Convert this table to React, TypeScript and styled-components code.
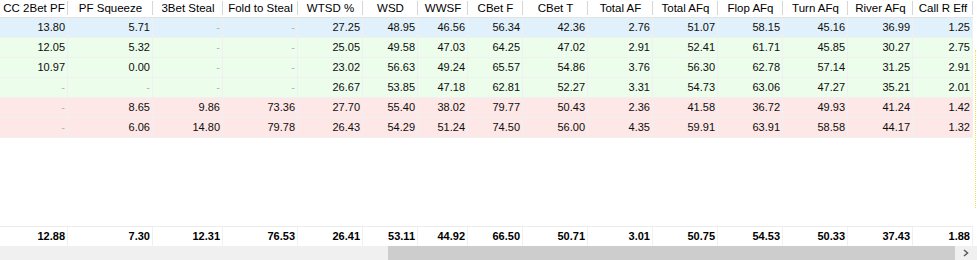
import React, { ReactElement } from 'react';
import styled, { createGlobalStyle } from 'styled-components';

const GlobalStyle = createGlobalStyle`
  html, body {
    margin: 0;
    padding: 0;
    background: #ffffff;
  }
  body {
    font-family: 'Liberation Sans', Arial, sans-serif;
  }
`;

const COLUMNS = '68px 85px 70px 75px 65px 55px 50px 55px 65px 65px 65px 65px 65px 65px 60px';

const HEADERS = [
  'CC 2Bet PF',
  'PF Squeeze',
  '3Bet Steal',
  'Fold to Steal',
  'WTSD %',
  'WSD',
  'WWSF',
  'CBet F',
  'CBet T',
  'Total AF',
  'Total AFq',
  'Flop AFq',
  'Turn AFq',
  'River AFq',
  'Call R Eff',
];

type Tone = 'blue' | 'green' | 'red';

const TONES: Record<Tone, string> = {
  blue: '#e1f1fb',
  green: '#ecfdec',
  red: '#fee7e7',
};

const ROWS: { tone: Tone; values: string[] }[] = [
  {
    tone: 'blue',
    values: ['13.80', '5.71', '-', '-', '27.25', '48.95', '46.56', '56.34', '42.36', '2.76', '51.07', '58.15', '45.16', '36.99', '1.25'],
  },
  {
    tone: 'green',
    values: ['12.05', '5.32', '-', '-', '25.05', '49.58', '47.03', '64.25', '47.02', '2.91', '52.41', '61.71', '45.85', '30.27', '2.75'],
  },
  {
    tone: 'green',
    values: ['10.97', '0.00', '-', '-', '23.02', '56.63', '49.24', '65.57', '54.86', '3.76', '56.30', '62.78', '57.14', '31.25', '2.91'],
  },
  {
    tone: 'green',
    values: ['-', '-', '-', '-', '26.67', '53.85', '47.18', '62.81', '52.27', '3.31', '54.73', '63.06', '47.27', '35.21', '2.01'],
  },
  {
    tone: 'red',
    values: ['-', '8.65', '9.86', '73.36', '27.70', '55.40', '38.02', '79.77', '50.43', '2.36', '41.58', '36.72', '49.93', '41.24', '1.42'],
  },
  {
    tone: 'red',
    values: ['-', '6.06', '14.80', '79.78', '26.43', '54.29', '51.24', '74.50', '56.00', '4.35', '59.91', '63.91', '58.58', '44.17', '1.32'],
  },
];

const TOTALS = ['12.88', '7.30', '12.31', '76.53', '26.41', '53.11', '44.92', '66.50', '50.71', '3.01', '50.75', '54.53', '50.33', '37.43', '1.88'];

const Page = styled.div`
  width: 977px;
  height: 260px;
  display: flex;
  flex-direction: column;
  overflow: hidden;
  background: #ffffff;
  font-size: 11px;
  color: #0d0d0d;
`;

const Body = styled.div`
  flex: 1;
  display: flex;
  min-height: 0;
`;

const Table = styled.div`
  width: 973px;
  display: flex;
  flex-direction: column;
`;

const HeaderRow = styled.div`
  display: grid;
  grid-template-columns: ${COLUMNS};
  height: 17px;
  border-bottom: 1px solid #e3e3e3;
`;

const HeaderCell = styled.div`
  position: relative;
  line-height: 17px;
  font-size: 11.5px;
  text-align: center;
  white-space: nowrap;
  color: #000000;

  &::after {
    content: '';
    position: absolute;
    right: 0;
    top: 1px;
    bottom: 2px;
    width: 1px;
    background: #d6d6d6;
  }
`;

const DataRow = styled.div<{ $tone: Tone }>`
  display: grid;
  grid-template-columns: ${COLUMNS};
  height: 20px;
  box-sizing: border-box;
  border-bottom: 1px solid #f0f0f0;
  background: ${(p) => TONES[p.$tone]};
`;

const Cell = styled.div<{ $empty?: boolean }>`
  box-sizing: border-box;
  padding-right: 2px;
  border-right: 1px solid #f0f0f0;
  line-height: 19px;
  text-align: right;
  white-space: nowrap;
  color: ${(p) => (p.$empty ? '#b4b4b4' : '#0d0d0d')};
`;

const Spacer = styled.div`
  flex: 1;
`;

const TotalRow = styled.div`
  display: grid;
  grid-template-columns: ${COLUMNS};
  height: 20px;
  box-sizing: border-box;
  border-top: 1px solid #ececec;
`;

const TotalCell = styled(Cell)`
  font-weight: 700;
  color: #000000;
`;

const Gutter = styled.div`
  width: 4px;
  display: flex;
  padding: 50px 0 38px 2px;
  box-sizing: border-box;
`;

const FocusLine = styled.div`
  border-left: 1px dotted #f1df4e;
`;

const ScrollBar = styled.div`
  height: 14px;
  display: flex;
  align-items: stretch;
  background: #f0f0f0;
`;

const Track = styled.div`
  flex: 1;
  display: flex;
  padding-left: 388px;
`;

const Thumb = styled.div`
  flex: 1;
  background: #cdcdcd;
`;

const ArrowButton = styled.div`
  width: 22px;
  display: flex;
  align-items: center;
  justify-content: center;
`;

const App = (): ReactElement => {
  return (
    <>
      <GlobalStyle />
      <Page>
        <Body>
          <Table>
            <HeaderRow>
              {HEADERS.map((h) => (
                <HeaderCell key={h}>{h}</HeaderCell>
              ))}
            </HeaderRow>
            {ROWS.map((row, i) => (
              <DataRow key={i} $tone={row.tone}>
                {row.values.map((v, j) => (
                  <Cell key={j} $empty={v === '-'}>
                    {v}
                  </Cell>
                ))}
              </DataRow>
            ))}
            <Spacer />
            <TotalRow>
              {TOTALS.map((v, j) => (
                <TotalCell key={j}>{v}</TotalCell>
              ))}
            </TotalRow>
          </Table>
          <Gutter>
            <FocusLine />
          </Gutter>
        </Body>
        <ScrollBar>
          <Track>
            <Thumb />
          </Track>
          <ArrowButton>
            <svg width="6" height="8" viewBox="0 0 6 8">
              <path d="M1 1 L4.5 4 L1 7" fill="none" stroke="#5f5f5f" strokeWidth="1.6" />
            </svg>
          </ArrowButton>
        </ScrollBar>
      </Page>
    </>
  );
};

export default App;
